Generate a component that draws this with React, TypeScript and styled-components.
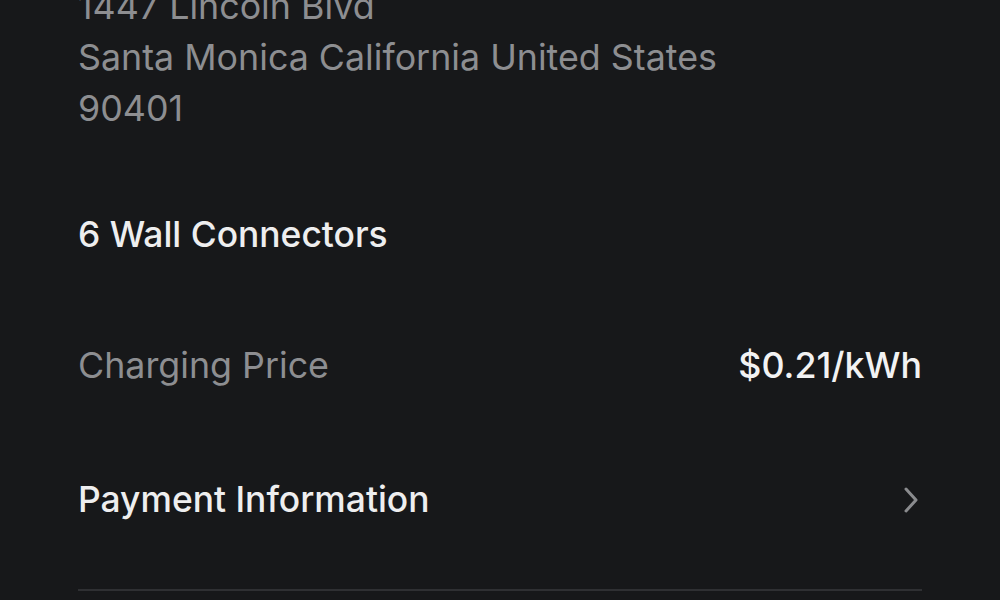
import React from 'react';
import styled, { createGlobalStyle } from 'styled-components';

const GlobalStyle = createGlobalStyle`
  html, body {
    margin: 0;
    padding: 0;
    background: #17181a;
    overflow: hidden;
  }
  body {
    font-family: Inter, "Liberation Sans", Arial, sans-serif;
    -webkit-font-smoothing: antialiased;
  }
`;

const Page = styled.div`
  width: 1000px;
  height: 600px;
  background: #17181a;
  overflow: hidden;
`;

const Content = styled.div`
  margin-top: -19px;
  padding: 0 78px;
  display: flex;
  flex-direction: column;
`;

const Address = styled.div`
  color: #8d8e91;
  font-size: 35.8px;
  line-height: 51px;
`;

const Line = styled.div``;

const Connectors = styled.div`
  margin-top: 75px;
  color: #eeeeef;
  font-size: 35.4px;
  font-weight: 500;
  line-height: 51px;
`;

const Row = styled.div<{ $gap: number }>`
  display: flex;
  justify-content: space-between;
  align-items: center;
  margin-top: ${(p) => p.$gap}px;
  line-height: 51px;
`;

const Label = styled.span<{ $muted?: boolean }>`
  color: ${(p) => (p.$muted ? '#8d8e91' : '#eeeeef')};
  font-size: ${(p) => (p.$muted ? 35.8 : 35.4)}px;
  font-weight: ${(p) => (p.$muted ? 400 : 500)};
`;

const Value = styled.span`
  color: #f2f2f3;
  font-size: 35.8px;
  font-weight: 500;
`;

const Chevron = styled.svg`
  width: 18px;
  height: 30px;
  margin-right: 2px;
`;

const Divider = styled.div`
  margin-top: 64px;
  height: 2px;
  background: #2f3033;
`;

export default function App() {
  return (
    <>
      <GlobalStyle />
      <Page>
        <Content>
          <Address>
            <Line>1447 Lincoln Blvd</Line>
            <Line>Santa Monica California United States</Line>
            <Line>90401</Line>
          </Address>
          <Connectors>6 Wall Connectors</Connectors>
          <Row $gap={80}>
            <Label $muted>Charging Price</Label>
            <Value>$0.21/kWh</Value>
          </Row>
          <Row $gap={83}>
            <Label>Payment Information</Label>
            <Chevron viewBox="0 0 18 30" fill="none">
              <path d="M4 4 L14 15 L4 26" stroke="#8a8b8e" strokeWidth="3" strokeLinecap="round" strokeLinejoin="round" />
            </Chevron>
          </Row>
          <Divider />
        </Content>
      </Page>
    </>
  );
}
